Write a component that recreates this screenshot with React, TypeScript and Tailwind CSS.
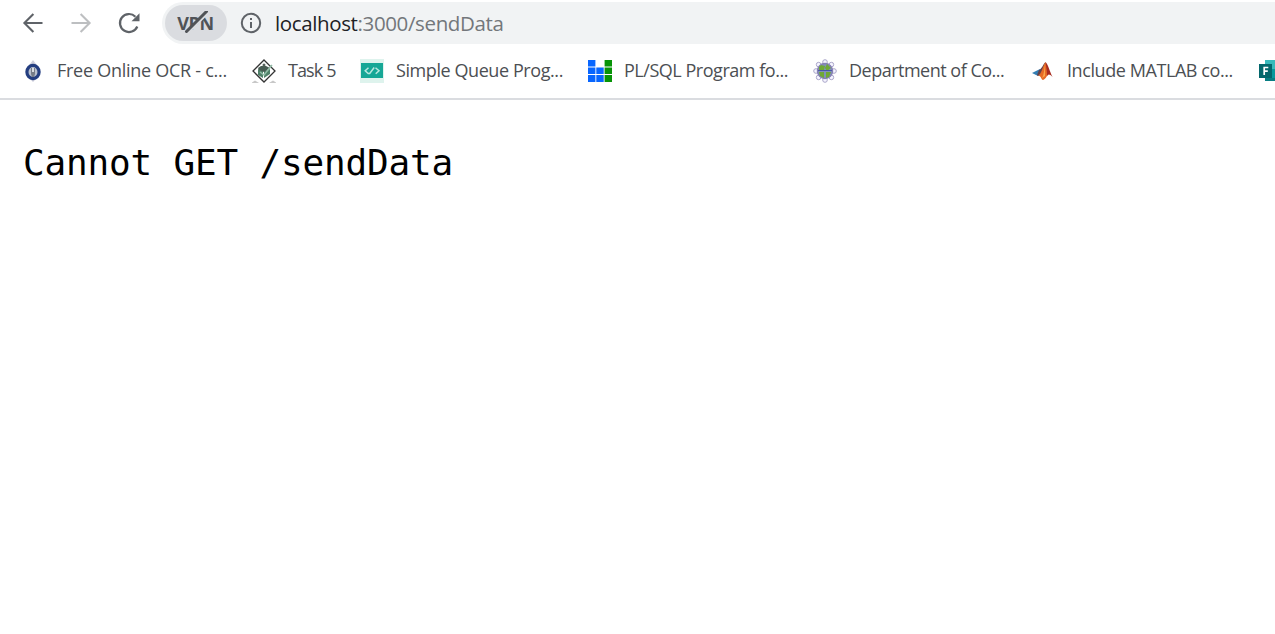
import React from "react";

function BackIcon({ className }: { className: string }) {
  return (
    <svg viewBox="0 0 24 24" className={className} fill="none" stroke="currentColor" strokeWidth="2.1">
      <path d="M21.5 12H3.5M12.4 3L3.4 12L12.4 21" />
    </svg>
  );
}

function ReloadIcon() {
  return (
    <svg viewBox="0 0 24 24" className="size-6 text-[#5f6368]">
      <path d="M20.300 15.500A9 9 0 1 1 18.4 5.7" fill="none" stroke="currentColor" strokeWidth="2.2" />
      <path d="M22.5 2.2v8h-8z" fill="currentColor" />
    </svg>
  );
}

function VpnBadge() {
  return (
    <span className="ml-[23px] flex h-9 w-[62px] shrink-0 items-center justify-center rounded-full bg-[#dadce0]">
      <span className="relative flex h-6 w-10 items-center justify-center font-['Open_Sans',sans-serif] text-[18px] leading-6 font-bold tracking-[-0.4px] text-[#505357]">
        <span className="-ml-px">VPN</span>
        <svg viewBox="0 0 40 24" className="absolute inset-0 h-6 w-10" fill="none" strokeLinecap="round">
          <path d="M12.500 21L32 1.500" stroke="#dadce0" strokeWidth="3" />
          <path d="M10.5 20.5L30.5 0.5" stroke="#505357" strokeWidth="3" />
        </svg>
      </span>
    </span>
  );
}

function InfoIcon() {
  return (
    <svg viewBox="0 0 22 22" className="ml-[13px] size-[22px] shrink-0 text-[#5f6368]">
      <circle cx="11" cy="11" r="9.200" fill="none" stroke="currentColor" strokeWidth="2" />
      <path d="M10 6h2v2h-2zM10 10h2v6h-2z" fill="currentColor" />
    </svg>
  );
}

const icons = {
  ocr: (
    <>
      <path d="M12 1l3 4H9zM9 20h6l-3 3z" fill="#cfd0dc" />
      <ellipse cx="12" cy="13" rx="6.1" ry="6.6" fill="#b9c1ce" stroke="#243e80" strokeWidth="3.2" />
      <path d="M10 9h4v6l-1 3h-2l-1-3z" fill="#777d88" />
      <path d="M11 9h2v4h-2z" fill="#d9dce0" />
    </>
  ),
  task: (
    <>
      <path d="M0 23.500l3-2 4 2.500H0zM24 23.500l-3-2-4 2.500h7z" fill="#c8c8c8" />
      <path d="M12 1L23 12L12 23L1 12z" fill="#fff" stroke="#333" strokeWidth="1.3" />
      <path d="M6 10l5 2v7l-5-3zM18 10l-6 2v7l6-4z" fill="#4f8068" />
      <path d="M6 9l3-2 5 0 4 2-6 4-5-2z" fill="#485c53" />
      <path d="M8 13l4 3 8-10" fill="none" stroke="#92bda7" strokeWidth="1.5" />
      <circle cx="12" cy="6" r="1.5" fill="#56615b" />
    </>
  ),
  code: (
    <>
      <path d="M0 0h24v24H0z" fill="#def3ed" />
      <path d="M1 4h22v15H1z" fill="#16a796" />
      <path d="M8.500 8.700L5.200 11.700l3 2.800h1.500l4.500-6M15.500 8.700l3.500 3-3.300 3" fill="none" stroke="#b8e7df" strokeWidth="1.5" />
    </>
  ),
  sql: (
    <>
      <path d="M0 1h7.400v6.600H0zM0 8.500h7.400v6.600H0zM0 16h7.400v7H0zM8.300 8.500h7.400v6.600H8.300zM8.300 16h7.400v7H8.300z" fill="#0866ff" />
      <path d="M16.600 1H24v6.600h-7.400zM16.600 8.500H24v6.600h-7.400zM16.600 16H24v7h-7.400z" fill="#079407" />
    </>
  ),
  dept: (
    <>
      <g fill="#f5f4ff" stroke="#aaa6c9" strokeWidth="1">
        <circle cx="12" cy="3" r="2.300" />
        <circle cx="18.400" cy="5.600" r="2.300" />
        <circle cx="21" cy="12" r="2.300" />
        <circle cx="18.400" cy="18.400" r="2.300" />
        <circle cx="12" cy="21" r="2.300" />
        <circle cx="5.600" cy="18.400" r="2.300" />
        <circle cx="3" cy="12" r="2.300" />
        <circle cx="5.600" cy="5.600" r="2.300" />
      </g>
      <circle cx="12" cy="12" r="7.500" fill="#8090bb" stroke="#8580b4" strokeWidth="1.500" />
      <path d="M8 6l4 1-1 4-5 1 0-4zM14 5l4 4-4 3-2-3zM6 13l5 0v6l-4-2zM13 13l5 0-2 5-3 1z" fill="#70a836" />
      <path d="M5 11.500h14" stroke="#4858a4" strokeWidth="1" />
    </>
  ),
  matlab: (
    <>
      <path d="M1 14l8-4 3 3-5 4z" fill="#347eb3" />
      <path d="M8 11c3-1 4-6 6.500-8L11 14l-4 3-1-1z" fill="#65414a" />
      <path d="M14.500 3C11 9 11 14 7 17c3-1 3 4 5 4 3-1 4-5 6-6-2-4-2-9-3.500-12z" fill="#e76b25" />
      <path d="M14.500 3c3 3 4 9 7 15-3-3-4-3-5.500-1 0-6-1-9-1.500-14z" fill="#a82c20" />
      <path d="M14 6c-1 5-1 10-3 13l3-2z" fill="#fba64c" />
    </>
  ),
  forms: (
    <>
      <path d="M6 1h18v21H6z" fill="#087e83" />
      <path d="M6 1h18v10H6z" fill="#38babb" />
      <path d="M10 10h14v9H10z" fill="#08999d" />
      <path d="M0 5h13v14H0z" fill="#03676c" />
      <path d="M9.300 8.500H5.200V16M5 12.200h3.800" fill="none" stroke="#fff" strokeWidth="1.700" />
    </>
  ),
};

const bookmarks: { icon: keyof typeof icons; label: string; slot: string; spacing: string }[] = [
  { icon: "ocr", label: "Free Online OCR - c...", slot: "w-[231px]", spacing: "tracking-[-0.27px]" },
  { icon: "task", label: "Task 5", slot: "w-[108px]", spacing: "tracking-[-0.9px]" },
  { icon: "code", label: "Simple Queue Prog...", slot: "w-[228px]", spacing: "tracking-[-0.42px]" },
  { icon: "sql", label: "PL/SQL Program fo...", slot: "w-[225px]", spacing: "tracking-[-0.47px]" },
  { icon: "dept", label: "Department of Co...", slot: "w-[218px]", spacing: "tracking-[-0.5px]" },
  { icon: "matlab", label: "Include MATLAB co...", slot: "w-[228px]", spacing: "tracking-[-0.42px]" },
  { icon: "forms", label: "", slot: "w-6", spacing: "tracking-normal" },
];

export default function App() {
  return (
    <div className="h-[634px] w-full overflow-hidden bg-white font-['Open_Sans',sans-serif]">
      <header className="flex h-[100px] flex-col border-b-2 border-[#dadce0]">
        <div className="flex h-[46px] items-center pl-[21px]">
          <BackIcon className="size-6 text-[#5f6368]" />
          <BackIcon className="ml-6 size-6 rotate-180 text-[#bdbfc1]" />
          <div className="ml-6">
            <ReloadIcon />
          </div>
          <div className="ml-[21px] flex h-[42px] flex-1 items-center rounded-l-full bg-[#f1f3f4]">
            <div className="-ml-[20px] flex items-center">
              <VpnBadge />
              <InfoIcon />
              <p className="ml-[13px] text-[20.5px] leading-7 tracking-[-0.37px] whitespace-nowrap text-[#73777b]">
                <span className="text-[#202124]">localhost</span>:3000/sendData
              </p>
            </div>
          </div>
        </div>
        <nav className="flex h-[50px] items-center pl-[21px]">
          {bookmarks.map((b) => (
            <div key={b.icon} className={`flex shrink-0 items-center gap-3 ${b.slot}`}>
              <svg viewBox="0 0 24 24" className="size-6 shrink-0">
                {icons[b.icon]}
              </svg>
              {b.label && (
                <span className={`-mt-0.5 text-[18px] leading-6 whitespace-nowrap text-[#4c4f53] ${b.spacing}`}>
                  {b.label}
                </span>
              )}
            </div>
          ))}
        </nav>
      </header>
      <main className="px-6 pt-[42px]">
        <pre className="-ml-px font-['DejaVu_Sans_Mono',monospace] text-[36px] leading-[42px] tracking-[-0.18px] text-black">Cannot GET /sendData</pre>
      </main>
    </div>
  );
}
